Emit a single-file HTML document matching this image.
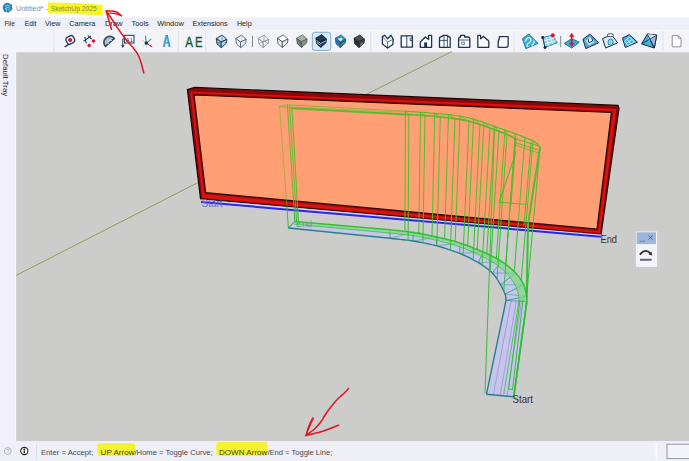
<!DOCTYPE html>
<html lang="en"><head><meta charset="utf-8"><title>Untitled - SketchUp 2025</title>
<style>
html,body{margin:0;padding:0;background:#fff;overflow:hidden}
body{width:689px;height:461px;position:relative;font-family:"Liberation Sans",sans-serif}
svg{position:absolute;left:0;top:0;display:block}
</style></head><body>
<svg width="689" height="461" viewBox="0 0 689 461">
<!-- window chrome -->
<rect x="0" y="0" width="689" height="461" fill="#ffffff"/>
<rect x="0" y="17.3" width="689" height="13.2" fill="#efeff7"/>
<rect x="0" y="30.3" width="689" height="22" fill="#f3f3fa"/>
<rect x="0" y="30.2" width="689" height="0.8" fill="#f9f9fd"/>
<rect x="0" y="52.2" width="16.3" height="389.2" fill="#f1f0fa"/>
<rect x="15.4" y="52.2" width="0.8" height="389.2" fill="#fbfbff"/>
<rect x="16.1" y="52.2" width="672.9" height="389.2" fill="#cccccb"/>
<rect x="0" y="441.3" width="689" height="20" fill="#efeff7"/>
<rect x="667" y="444.2" width="30" height="14.4" fill="#f3f3fa" stroke="#8e8e94" stroke-width="0.9"/>
<line x1="656.5" y1="443" x2="656.5" y2="460" stroke="#fbfbff" stroke-width="1.6"/>
<!-- 3D scene -->
<g>
<line x1="16.3" y1="275.3" x2="200" y2="181.5" stroke="#8c9a4c" stroke-width="0.9"/>
<line x1="366" y1="94.5" x2="452" y2="51.5" stroke="#8c9a4c" stroke-width="0.9"/>
<polygon points="187.4,89.6 194.8,87.4 618.0,105.4 619.0,108.5 601.0,234.6 200.5,198.8" fill="#8c0707" stroke="#1a0505" stroke-width="1.2" stroke-linejoin="round"/>
<polygon points="190.2,91.6 616.3,108.9 600.2,233.2 202.4,197.9" fill="#dc1111"/>
<polygon points="194.0,94.9 611.4,112.5 597.0,229.2 205.7,192.7" fill="none" stroke="#a80c0c" stroke-width="3.4" stroke-linejoin="miter"/>
<polygon points="194.0,94.9 611.4,112.5 597.0,229.2 205.7,192.7" fill="#ff9f73" stroke="#2a0808" stroke-width="1.2"/>
<polygon points="201.0,199.4 601.0,234.6 601.0,239.0 201.0,204.2" fill="#cfcbf0"/>
<line x1="201" y1="202.1" x2="600.8" y2="236.7" stroke="#2a2ad8" stroke-width="2"/>
<polygon points="294.8,221.5 390.0,229.8 391.8,230.0 394.1,230.2 396.9,230.5 400.0,230.8 403.3,231.2 406.7,231.5 409.9,232.0 413.0,232.4 415.9,232.9 418.8,233.4 421.8,233.9 424.7,234.5 427.7,235.1 430.6,235.7 433.6,236.3 436.5,237.0 439.4,237.7 442.3,238.3 445.3,239.0 448.2,239.7 451.1,240.5 454.0,241.3 456.9,242.1 459.8,243.0 462.7,244.0 465.7,245.0 468.7,246.1 471.7,247.3 474.6,248.5 477.5,249.6 480.3,250.8 483.0,252.0 485.6,253.1 488.1,254.3 490.5,255.4 492.9,256.6 495.2,257.8 497.4,259.0 499.5,260.2 501.6,261.5 503.6,262.8 505.6,264.2 507.4,265.7 509.3,267.1 511.0,268.6 512.6,270.1 514.2,271.5 515.6,273.0 516.9,274.5 518.2,275.9 519.3,277.4 520.3,278.9 521.3,280.4 522.2,281.9 523.0,283.3 523.7,284.8 524.3,286.3 524.9,287.9 525.3,289.4 525.7,291.0 526.0,292.5 526.3,293.9 526.5,295.3 526.7,296.4 526.9,297.4 526.9,298.3 527.0,299.1 526.9,299.8 526.9,300.4 526.9,300.9 526.8,301.3 526.8,301.7 513.8,396.8 486.5,394.2 506.0,300.4 505.9,299.9 505.9,299.3 505.9,298.6 505.8,297.8 505.7,296.9 505.5,295.9 505.3,295.0 505.0,294.0 504.6,293.0 504.2,292.0 503.7,290.9 503.2,289.7 502.6,288.6 502.0,287.3 501.3,286.1 500.5,284.8 499.7,283.4 498.8,282.0 497.9,280.5 497.0,279.0 496.0,277.4 494.8,275.9 493.6,274.4 492.3,273.0 490.9,271.6 489.3,270.3 487.7,269.0 486.0,267.7 484.2,266.4 482.3,265.2 480.4,263.9 478.4,262.7 476.3,261.5 474.2,260.3 472.0,259.1 469.7,257.9 467.3,256.7 464.9,255.6 462.4,254.5 459.8,253.4 457.1,252.3 454.3,251.3 451.4,250.3 448.5,249.3 445.5,248.4 442.4,247.5 439.5,246.6 436.5,245.8 433.6,245.1 430.6,244.4 427.7,243.7 424.7,243.1 421.8,242.5 418.8,242.0 415.9,241.5 413.0,241.0 409.9,240.5 406.7,240.1 403.3,239.7 400.0,239.4 396.9,239.0 394.1,238.7 391.8,238.5 390.0,238.3 288.4,228.0" fill="#c6c6ea"/>
<line x1="390.0" y1="229.8" x2="390.0" y2="238.3" stroke="#2f8f8f" stroke-width="0.8"/>
<line x1="413.0" y1="232.4" x2="413.0" y2="241.0" stroke="#2f8f8f" stroke-width="0.8"/>
<line x1="413.0" y1="232.4" x2="390.0" y2="238.3" stroke="#4a9aa8" stroke-width="0.6"/>
<line x1="436.5" y1="237.0" x2="436.5" y2="245.8" stroke="#2f8f8f" stroke-width="0.8"/>
<line x1="436.5" y1="237.0" x2="413.0" y2="241.0" stroke="#4a9aa8" stroke-width="0.6"/>
<line x1="459.8" y1="243.0" x2="459.8" y2="253.4" stroke="#2f8f8f" stroke-width="0.8"/>
<line x1="459.8" y1="243.0" x2="436.5" y2="245.8" stroke="#4a9aa8" stroke-width="0.6"/>
<line x1="483.0" y1="252.0" x2="478.4" y2="262.7" stroke="#2f8f8f" stroke-width="0.8"/>
<line x1="483.0" y1="252.0" x2="459.8" y2="253.4" stroke="#4a9aa8" stroke-width="0.6"/>
<line x1="501.6" y1="261.5" x2="492.3" y2="273.0" stroke="#2f8f8f" stroke-width="0.8"/>
<line x1="501.6" y1="261.5" x2="478.4" y2="262.7" stroke="#4a9aa8" stroke-width="0.6"/>
<line x1="515.6" y1="273.0" x2="500.5" y2="284.8" stroke="#2f8f8f" stroke-width="0.8"/>
<line x1="515.6" y1="273.0" x2="492.3" y2="273.0" stroke="#4a9aa8" stroke-width="0.6"/>
<line x1="523.7" y1="284.8" x2="505.0" y2="294.0" stroke="#2f8f8f" stroke-width="0.8"/>
<line x1="523.7" y1="284.8" x2="500.5" y2="284.8" stroke="#4a9aa8" stroke-width="0.6"/>
<line x1="526.7" y1="296.4" x2="506.0" y2="300.4" stroke="#2f8f8f" stroke-width="0.8"/>
<line x1="526.7" y1="296.4" x2="505.0" y2="294.0" stroke="#4a9aa8" stroke-width="0.6"/>
<line x1="526.8" y1="301.7" x2="506.0" y2="300.4" stroke="#2f8f8f" stroke-width="0.8"/>
<line x1="511.2" y1="300.7" x2="493.3" y2="394.9" stroke="#8f8fd8" stroke-width="0.7"/>
<line x1="516.4" y1="301.0" x2="500.1" y2="395.5" stroke="#8f8fd8" stroke-width="0.7"/>
<line x1="521.6" y1="301.4" x2="507.0" y2="396.1" stroke="#8f8fd8" stroke-width="0.7"/>
<polyline points="288.4,228.0 390.0,238.3 391.8,238.5 394.1,238.7 396.9,239.0 400.0,239.4 403.3,239.7 406.7,240.1 409.9,240.5 413.0,241.0 415.9,241.5 418.8,242.0 421.8,242.5 424.7,243.1 427.7,243.7 430.6,244.4 433.6,245.1 436.5,245.8 439.5,246.6 442.4,247.5 445.5,248.4 448.5,249.3 451.4,250.3 454.3,251.3 457.1,252.3 459.8,253.4 462.4,254.5 464.9,255.6 467.3,256.7 469.7,257.9 472.0,259.1 474.2,260.3 476.3,261.5 478.4,262.7 480.4,263.9 482.3,265.2 484.2,266.4 486.0,267.7 487.7,269.0 489.3,270.3 490.9,271.6 492.3,273.0 493.6,274.4 494.8,275.9 496.0,277.4 497.0,279.0 497.9,280.5 498.8,282.0 499.7,283.4 500.5,284.8 501.3,286.1 502.0,287.3 502.6,288.6 503.2,289.7 503.7,290.9 504.2,292.0 504.6,293.0 505.0,294.0 505.3,295.0 505.5,295.9 505.7,296.9 505.8,297.8 505.9,298.6 505.9,299.3 505.9,299.9 506.0,300.4 486.5,394.2" fill="none" stroke="#2a7f8f" stroke-width="1.4"/>
<polyline points="486.5,394.2 513.8,396.8" fill="none" stroke="#2a7f8f" stroke-width="1.4"/>
<polyline points="288.4,228.0 294.8,221.5" fill="none" stroke="#2a7f8f" stroke-width="1"/>
<polygon points="294.8,221.5 390.0,229.8 391.8,230.0 394.1,230.2 396.9,230.5 400.0,230.8 403.3,231.2 406.7,231.5 409.9,232.0 413.0,232.4 415.9,232.9 418.8,233.4 421.8,233.9 424.7,234.5 427.7,235.1 430.6,235.7 433.6,236.3 436.5,237.0 439.4,237.7 442.3,238.3 445.3,239.0 448.2,239.7 451.1,240.5 454.0,241.3 456.9,242.1 459.8,243.0 462.7,244.0 465.7,245.0 468.7,246.1 471.7,247.3 474.6,248.5 477.5,249.6 480.3,250.8 483.0,252.0 485.6,253.1 488.1,254.3 490.5,255.4 492.9,256.6 495.2,257.8 497.4,259.0 499.5,260.2 501.6,261.5 503.6,262.8 505.6,264.2 507.4,265.7 509.3,267.1 511.0,268.6 512.6,270.1 514.2,271.5 515.6,273.0 516.9,274.5 518.2,275.9 519.3,277.4 520.3,278.9 521.3,280.4 522.2,281.9 523.0,283.3 523.7,284.8 524.3,286.3 524.9,287.9 525.3,289.4 525.7,291.0 526.0,292.5 526.3,293.9 526.5,295.3 526.7,296.4 526.9,297.4 526.9,298.3 527.0,299.1 526.9,299.8 526.9,300.4 526.9,300.9 526.8,301.3 526.8,301.7 518.9,301.2 518.9,301.0 518.9,300.7 519.0,300.4 519.0,300.0 519.0,299.6 519.0,299.1 518.9,298.0 518.8,297.1 518.6,296.2 518.4,295.1 518.2,293.8 518.0,292.8 517.7,291.5 517.3,290.2 516.9,289.0 516.4,287.8 515.8,286.5 515.1,285.2 514.4,283.8 513.6,282.5 512.7,281.1 511.7,279.7 510.6,278.2 509.4,276.7 508.1,275.2 506.8,273.7 505.5,272.3 504.1,270.9 502.7,269.5 501.0,268.1 499.4,266.8 497.7,265.6 496.0,264.3 494.1,263.1 492.1,261.8 490.0,260.6 487.8,259.4 485.6,258.2 483.2,257.0 480.8,255.8 478.2,254.5 475.5,253.3 472.8,252.1 470.0,250.9 467.1,249.7 464.3,248.5 461.4,247.5 458.5,246.5 455.7,245.5 452.9,244.6 450.0,243.8 447.1,243.0 444.3,242.3 441.4,241.5 438.6,240.8 435.7,240.1 432.8,239.5 429.9,238.8 427.0,238.2 424.1,237.6 421.2,237.1 418.3,236.6 415.4,236.1 412.5,235.6 409.5,235.2 406.3,234.8 403.0,234.4 399.7,234.0 396.6,233.7 393.8,233.4 391.4,233.2 389.7,233.0 294.5,224.2" fill="#7fdc7f" fill-opacity="0.7"/>
<polyline points="294.8,221.5 390.0,229.8 391.8,230.0 394.1,230.2 396.9,230.5 400.0,230.8 403.3,231.2 406.7,231.5 409.9,232.0 413.0,232.4 415.9,232.9 418.8,233.4 421.8,233.9 424.7,234.5 427.7,235.1 430.6,235.7 433.6,236.3 436.5,237.0 439.4,237.7 442.3,238.3 445.3,239.0 448.2,239.7 451.1,240.5 454.0,241.3 456.9,242.1 459.8,243.0 462.7,244.0 465.7,245.0 468.7,246.1 471.7,247.3 474.6,248.5 477.5,249.6 480.3,250.8 483.0,252.0 485.6,253.1 488.1,254.3 490.5,255.4 492.9,256.6 495.2,257.8 497.4,259.0 499.5,260.2 501.6,261.5 503.6,262.8 505.6,264.2 507.4,265.7 509.3,267.1 511.0,268.6 512.6,270.1 514.2,271.5 515.6,273.0 516.9,274.5 518.2,275.9 519.3,277.4 520.3,278.9 521.3,280.4 522.2,281.9 523.0,283.3 523.7,284.8 524.3,286.3 524.9,287.9 525.3,289.4 525.7,291.0 526.0,292.5 526.3,293.9 526.5,295.3 526.7,296.4 526.9,297.4 526.9,298.3 527.0,299.1 526.9,299.8 526.9,300.4 526.9,300.9 526.8,301.3 526.8,301.7 513.8,396.8" fill="none" stroke="#2fbf2f" stroke-width="1.6" stroke-opacity="0.95"/>
<polyline points="294.5,224.2 389.7,233.0 391.4,233.2 393.8,233.4 396.6,233.7 399.7,234.0 403.0,234.4 406.3,234.8 409.5,235.2 412.5,235.6 415.4,236.1 418.3,236.6 421.2,237.1 424.1,237.6 427.0,238.2 429.9,238.8 432.8,239.5 435.7,240.1 438.6,240.8 441.4,241.5 444.3,242.3 447.1,243.0 450.0,243.8 452.9,244.6 455.7,245.5 458.5,246.5 461.4,247.5 464.3,248.5 467.1,249.7 470.0,250.9 472.8,252.1 475.5,253.3 478.2,254.5 480.8,255.8 483.2,257.0 485.6,258.2 487.8,259.4 490.0,260.6 492.1,261.8 494.1,263.1 496.0,264.3 497.7,265.6 499.4,266.8 501.0,268.1 502.7,269.5 504.1,270.9 505.5,272.3 506.8,273.7 508.1,275.2 509.4,276.7 510.6,278.2 511.7,279.7 512.7,281.1 513.6,282.5 514.4,283.8 515.1,285.2 515.8,286.5 516.4,287.8 516.9,289.0 517.3,290.2 517.7,291.5 518.0,292.8 518.2,293.8 518.4,295.1 518.6,296.2 518.8,297.1 518.9,298.0 519.0,299.1 519.0,299.6 519.0,300.0 519.0,300.4 518.9,300.7 518.9,301.0 518.9,301.2 503.7,394.7" fill="none" stroke="#2fbf2f" stroke-width="0.8" stroke-opacity="0.9"/>
<defs><clipPath id="cw"><polygon points="187.4,89.6 194.8,87.4 618.0,105.4 619.0,108.5 601.0,234.6 200.5,198.8"/></clipPath><clipPath id="cg"><path clip-rule="evenodd" d="M0,0H689V461H0Z M187.4,89.6 L194.8,87.4 L618.0,105.4 L619.0,108.5 L601.0,234.6 L200.5,198.8Z"/></clipPath></defs>
<g clip-path="url(#cw)"><g stroke="#52bc2a" stroke-opacity="0.95" fill="none" stroke-linecap="round"><line x1="279.6" y1="106.5" x2="288.4" y2="228.0" stroke-width="1.0" stroke-opacity="0.5"/><line x1="287.4" y1="104.8" x2="294.8" y2="221.5" stroke-width="1.1" stroke-opacity="0.8"/><line x1="289.6" y1="105.8" x2="296.6" y2="222.0" stroke-width="1.1" stroke-opacity="0.8"/><line x1="292.0" y1="108.3" x2="298.4" y2="222.2" stroke-width="1.1" stroke-opacity="0.85"/><line x1="279.6" y1="106.5" x2="287.4" y2="104.8" stroke-width="1.0" stroke-opacity="0.5"/><line x1="279.6" y1="106.5" x2="292.0" y2="108.3" stroke-width="0.8" stroke-opacity="0.5"/><line x1="279.6" y1="106.5" x2="405.0" y2="112.3" stroke-width="0.8" stroke-opacity="0.5"/><line x1="287.4" y1="104.8" x2="405.0" y2="111.2" stroke-width="0.9" stroke-opacity="0.7"/><line x1="292.0" y1="108.3" x2="406.0" y2="114.4" stroke-width="2.0"/><line x1="405.4" y1="111.2" x2="404.9" y2="231.3" stroke-width="1.0"/><line x1="420.5" y1="112.3" x2="418.8" y2="233.4" stroke-width="1.0"/><line x1="434.8" y1="113.4" x2="432.0" y2="236.0" stroke-width="1.0"/><line x1="448.5" y1="114.6" x2="444.6" y2="238.9" stroke-width="1.0"/><line x1="460.0" y1="116.1" x2="455.2" y2="241.6" stroke-width="1.0"/><line x1="473.6" y1="119.2" x2="467.7" y2="245.7" stroke-width="1.0"/><line x1="484.0" y1="122.5" x2="477.2" y2="249.5" stroke-width="1.0"/><line x1="494.5" y1="126.4" x2="486.8" y2="253.7" stroke-width="1.0"/><line x1="505.0" y1="130.0" x2="496.4" y2="258.4" stroke-width="1.0"/><line x1="515.5" y1="133.8" x2="505.9" y2="264.5" stroke-width="1.0"/><line x1="525.0" y1="137.4" x2="514.3" y2="271.7" stroke-width="1.0"/><line x1="533.0" y1="140.9" x2="521.2" y2="280.2" stroke-width="1.0"/><line x1="540.0" y1="148.0" x2="526.7" y2="296.4" stroke-width="1.0"/><line x1="408.9" y1="114.6" x2="408.1" y2="240.3" stroke-width="1.0"/><line x1="425.0" y1="115.6" x2="422.9" y2="242.7" stroke-width="1.0"/><line x1="440.3" y1="117.0" x2="436.9" y2="245.9" stroke-width="1.0"/><line x1="455.0" y1="118.7" x2="450.4" y2="250.0" stroke-width="1.0"/><line x1="469.0" y1="121.3" x2="463.1" y2="254.8" stroke-width="1.0"/><line x1="480.0" y1="124.4" x2="473.1" y2="259.7" stroke-width="1.0"/><line x1="490.0" y1="128.1" x2="482.1" y2="265.0" stroke-width="1.0"/><line x1="499.0" y1="131.4" x2="490.2" y2="271.0" stroke-width="1.0"/><line x1="507.0" y1="134.5" x2="497.1" y2="279.2" stroke-width="1.0"/><line x1="515.0" y1="138.5" x2="503.8" y2="291.0" stroke-width="1.0"/><line x1="405.4" y1="111.2" x2="408.9" y2="114.6" stroke-width="0.8"/><line x1="420.5" y1="112.3" x2="425.0" y2="115.6" stroke-width="0.8"/><line x1="434.8" y1="113.4" x2="440.3" y2="117.0" stroke-width="0.8"/><line x1="448.5" y1="114.6" x2="455.0" y2="118.7" stroke-width="0.8"/><line x1="460.0" y1="116.1" x2="469.0" y2="121.3" stroke-width="0.8"/><line x1="473.6" y1="119.2" x2="480.0" y2="124.4" stroke-width="0.8"/><line x1="484.0" y1="122.5" x2="490.0" y2="128.1" stroke-width="0.8"/><line x1="494.5" y1="126.4" x2="499.0" y2="131.4" stroke-width="0.8"/><line x1="505.0" y1="130.0" x2="507.0" y2="134.5" stroke-width="0.8"/><line x1="515.5" y1="133.8" x2="515.0" y2="138.5" stroke-width="0.8"/><line x1="515.0" y1="138.5" x2="540.0" y2="146.5" stroke-width="1.0"/><line x1="515.0" y1="142.5" x2="539.6" y2="150.5" stroke-width="0.9"/><line x1="516.0" y1="145.5" x2="538.6" y2="153.0" stroke-width="0.8"/><line x1="530.8" y1="142.5" x2="530.4" y2="151.0" stroke-width="0.8"/><line x1="515.0" y1="138.5" x2="515.6" y2="146.0" stroke-width="0.9"/><line x1="516.0" y1="152.0" x2="499.2" y2="202.2" stroke-width="1.2"/><line x1="499.2" y1="202.2" x2="527.0" y2="204.5" stroke-width="1.0"/><line x1="516.0" y1="139.0" x2="511.0" y2="205.0" stroke-width="1.0"/><line x1="530.8" y1="146.0" x2="524.0" y2="225.0" stroke-width="1.0"/><line x1="540.0" y1="148.0" x2="533.2" y2="190.0" stroke-width="2.0"/><line x1="533.2" y1="190.0" x2="528.0" y2="224.8" stroke-width="2.0"/><line x1="528.0" y1="224.8" x2="526.7" y2="296.4" stroke-width="2.0"/><line x1="494.6" y1="126.4" x2="485.0" y2="392.9" stroke-width="1.0"/><line x1="520.0" y1="300.0" x2="508.6" y2="389.0" stroke-width="1.0"/><line x1="523.0" y1="300.0" x2="512.5" y2="389.5" stroke-width="1.0"/><line x1="508.6" y1="389.0" x2="512.5" y2="389.5" stroke-width="1.0"/><line x1="526.8" y1="301.7" x2="513.8" y2="396.8" stroke-width="1.6"/></g><g stroke="#52bc2a"><polyline points="405.0,111.2 406.9,111.3 409.4,111.5 412.3,111.7 415.6,111.9 419.2,112.2 422.8,112.4 426.5,112.7 430.0,113.0 433.6,113.3 437.4,113.6 441.3,114.0 445.3,114.3 449.2,114.7 453.0,115.1 456.5,115.5 459.7,116.0 462.5,116.5 465.1,117.0 467.5,117.5 469.7,118.1 471.8,118.6 473.8,119.2 475.9,119.9 478.0,120.5 480.1,121.2 482.2,121.8 484.2,122.5 486.1,123.3 488.1,124.0 490.2,124.8 492.3,125.6 494.6,126.4 497.1,127.3 499.7,128.2 502.4,129.1 505.2,130.1 507.9,131.1 510.6,132.0 513.2,132.9 515.5,133.8 517.7,134.6 519.8,135.4 521.7,136.1 523.6,136.9 525.4,137.6 527.1,138.2 528.6,138.9 530.0,139.5 531.3,140.1 532.4,140.6 533.4,141.1 534.2,141.6 535.0,142.0 535.7,142.5 536.4,143.0 537.0,143.5 537.6,144.1 538.1,144.7 538.5,145.3 538.9,146.0 539.3,146.6 539.6,147.2 539.8,147.6 540.0,148.0" fill="none" stroke-width="1.2"/><polyline points="406.0,114.4 407.8,114.5 410.2,114.6 413.0,114.8 416.1,115.0 419.5,115.2 423.0,115.4 426.6,115.7 430.0,116.0 433.5,116.3 437.3,116.7 441.2,117.1 445.2,117.5 449.1,118.0 452.9,118.4 456.5,118.9 459.7,119.4 462.5,119.9 465.1,120.4 467.5,120.9 469.7,121.4 471.8,122.0 473.8,122.6 475.9,123.2 478.0,123.8 480.2,124.5 482.4,125.2 484.5,126.0 486.7,126.8 488.8,127.6 490.8,128.4 492.7,129.1 494.6,129.8 496.4,130.5 498.1,131.1 499.8,131.7 501.3,132.3 502.9,132.8 504.3,133.4 505.7,134.0 507.0,134.5 508.3,135.1 509.5,135.6 510.7,136.2 511.8,136.8 512.8,137.3 513.7,137.8 514.4,138.2 515.0,138.5" fill="none" stroke-width="1.6"/></g></g>
<g clip-path="url(#cg)"><g stroke="#2fbf2f" stroke-opacity="0.95" fill="none" stroke-linecap="round"><line x1="279.6" y1="106.5" x2="288.4" y2="228.0" stroke-width="1.0"/><line x1="287.4" y1="104.8" x2="294.8" y2="221.5" stroke-width="1.1"/><line x1="289.6" y1="105.8" x2="296.6" y2="222.0" stroke-width="1.1"/><line x1="292.0" y1="108.3" x2="298.4" y2="222.2" stroke-width="1.1"/><line x1="279.6" y1="106.5" x2="287.4" y2="104.8" stroke-width="1.0"/><line x1="279.6" y1="106.5" x2="292.0" y2="108.3" stroke-width="0.8"/><line x1="279.6" y1="106.5" x2="405.0" y2="112.3" stroke-width="0.8"/><line x1="287.4" y1="104.8" x2="405.0" y2="111.2" stroke-width="0.9"/><line x1="292.0" y1="108.3" x2="406.0" y2="114.4" stroke-width="2.0"/><line x1="405.4" y1="111.2" x2="404.9" y2="231.3" stroke-width="1.0"/><line x1="420.5" y1="112.3" x2="418.8" y2="233.4" stroke-width="1.0"/><line x1="434.8" y1="113.4" x2="432.0" y2="236.0" stroke-width="1.0"/><line x1="448.5" y1="114.6" x2="444.6" y2="238.9" stroke-width="1.0"/><line x1="460.0" y1="116.1" x2="455.2" y2="241.6" stroke-width="1.0"/><line x1="473.6" y1="119.2" x2="467.7" y2="245.7" stroke-width="1.0"/><line x1="484.0" y1="122.5" x2="477.2" y2="249.5" stroke-width="1.0"/><line x1="494.5" y1="126.4" x2="486.8" y2="253.7" stroke-width="1.0"/><line x1="505.0" y1="130.0" x2="496.4" y2="258.4" stroke-width="1.0"/><line x1="515.5" y1="133.8" x2="505.9" y2="264.5" stroke-width="1.0"/><line x1="525.0" y1="137.4" x2="514.3" y2="271.7" stroke-width="1.0"/><line x1="533.0" y1="140.9" x2="521.2" y2="280.2" stroke-width="1.0"/><line x1="540.0" y1="148.0" x2="526.7" y2="296.4" stroke-width="1.0"/><line x1="408.9" y1="114.6" x2="408.1" y2="240.3" stroke-width="1.0"/><line x1="425.0" y1="115.6" x2="422.9" y2="242.7" stroke-width="1.0"/><line x1="440.3" y1="117.0" x2="436.9" y2="245.9" stroke-width="1.0"/><line x1="455.0" y1="118.7" x2="450.4" y2="250.0" stroke-width="1.0"/><line x1="469.0" y1="121.3" x2="463.1" y2="254.8" stroke-width="1.0"/><line x1="480.0" y1="124.4" x2="473.1" y2="259.7" stroke-width="1.0"/><line x1="490.0" y1="128.1" x2="482.1" y2="265.0" stroke-width="1.0"/><line x1="499.0" y1="131.4" x2="490.2" y2="271.0" stroke-width="1.0"/><line x1="507.0" y1="134.5" x2="497.1" y2="279.2" stroke-width="1.0"/><line x1="515.0" y1="138.5" x2="503.8" y2="291.0" stroke-width="1.0"/><line x1="405.4" y1="111.2" x2="408.9" y2="114.6" stroke-width="0.8"/><line x1="420.5" y1="112.3" x2="425.0" y2="115.6" stroke-width="0.8"/><line x1="434.8" y1="113.4" x2="440.3" y2="117.0" stroke-width="0.8"/><line x1="448.5" y1="114.6" x2="455.0" y2="118.7" stroke-width="0.8"/><line x1="460.0" y1="116.1" x2="469.0" y2="121.3" stroke-width="0.8"/><line x1="473.6" y1="119.2" x2="480.0" y2="124.4" stroke-width="0.8"/><line x1="484.0" y1="122.5" x2="490.0" y2="128.1" stroke-width="0.8"/><line x1="494.5" y1="126.4" x2="499.0" y2="131.4" stroke-width="0.8"/><line x1="505.0" y1="130.0" x2="507.0" y2="134.5" stroke-width="0.8"/><line x1="515.5" y1="133.8" x2="515.0" y2="138.5" stroke-width="0.8"/><line x1="515.0" y1="138.5" x2="540.0" y2="146.5" stroke-width="1.0"/><line x1="515.0" y1="142.5" x2="539.6" y2="150.5" stroke-width="0.9"/><line x1="516.0" y1="145.5" x2="538.6" y2="153.0" stroke-width="0.8"/><line x1="530.8" y1="142.5" x2="530.4" y2="151.0" stroke-width="0.8"/><line x1="515.0" y1="138.5" x2="515.6" y2="146.0" stroke-width="0.9"/><line x1="516.0" y1="152.0" x2="499.2" y2="202.2" stroke-width="1.2"/><line x1="499.2" y1="202.2" x2="527.0" y2="204.5" stroke-width="1.0"/><line x1="516.0" y1="139.0" x2="511.0" y2="205.0" stroke-width="1.0"/><line x1="530.8" y1="146.0" x2="524.0" y2="225.0" stroke-width="1.0"/><line x1="540.0" y1="148.0" x2="533.2" y2="190.0" stroke-width="2.0"/><line x1="533.2" y1="190.0" x2="528.0" y2="224.8" stroke-width="2.0"/><line x1="528.0" y1="224.8" x2="526.7" y2="296.4" stroke-width="2.0"/><line x1="494.6" y1="126.4" x2="485.0" y2="392.9" stroke-width="1.0"/><line x1="520.0" y1="300.0" x2="508.6" y2="389.0" stroke-width="1.0"/><line x1="523.0" y1="300.0" x2="512.5" y2="389.5" stroke-width="1.0"/><line x1="508.6" y1="389.0" x2="512.5" y2="389.5" stroke-width="1.0"/><line x1="526.8" y1="301.7" x2="513.8" y2="396.8" stroke-width="1.6"/></g></g>
<text x="201.5" y="206.5" font-family="Liberation Sans, sans-serif" font-size="10.5" fill="#6a6acc" textLength="21" lengthAdjust="spacingAndGlyphs">Start</text>
<text x="296" y="227" font-family="Liberation Sans, sans-serif" font-size="9.5" fill="#7a9a8a" textLength="16" lengthAdjust="spacingAndGlyphs">End</text>
<text x="600.5" y="242.6" font-family="Liberation Sans, sans-serif" font-size="10.8" fill="#333" textLength="16.5" lengthAdjust="spacingAndGlyphs">End</text>
<text x="512.5" y="402.8" font-family="Liberation Sans, sans-serif" font-size="10.8" fill="#333" textLength="20.5" lengthAdjust="spacingAndGlyphs">Start</text>
</g>
<!-- toolbar icons -->
<line x1="53.9" y1="31" x2="53.9" y2="51" stroke="#dcdce6" stroke-width="0.8"/>
<line x1="178.3" y1="31" x2="178.3" y2="51" stroke="#dcdce6" stroke-width="0.8"/>
<line x1="205.8" y1="31" x2="205.8" y2="51" stroke="#dcdce6" stroke-width="0.8"/>
<line x1="252.5" y1="35.8" x2="252.5" y2="46.9" stroke="#7f8a8c" stroke-width="1"/>
<line x1="370.8" y1="31" x2="370.8" y2="51" stroke="#dcdce6" stroke-width="0.8"/>
<line x1="514.1" y1="31" x2="514.1" y2="51" stroke="#dcdce6" stroke-width="0.8"/>
<line x1="560.7" y1="35.8" x2="560.7" y2="46.9" stroke="#7f8a8c" stroke-width="1"/>
<line x1="663" y1="31" x2="663" y2="51" stroke="#dcdce6" stroke-width="0.8"/>
<g><path d="M68.7,44.4 L65.2,46.6" stroke="#25385f" stroke-width="1.3" stroke-linecap="round"/><rect x="-4.1" y="-3.7" width="8.2" height="7.4" rx="2.5" transform="translate(70.3,39.9) rotate(-28)" fill="#fbfbff" stroke="#25385f" stroke-width="1.3"/><circle cx="70.2" cy="40" r="2.05" fill="#dc1424"/></g>
<g stroke="#1d3552" stroke-width="1.1" stroke-linecap="round"><path d="M83.9,41 L90.6,36.4 M84.9,37.2 L86.2,43 M88.2,35.8 L91.3,38.8"/></g><circle cx="93.5" cy="41.1" r="1.75" fill="#dc1424"/><circle cx="89.2" cy="45.4" r="1.75" fill="#dc1424"/>
<polygon points="105.4,46.3 104.5,45.0 104.0,43.5 103.9,42.0 104.2,40.5 104.9,39.1 105.9,37.9 107.2,37.0 108.7,36.5 110.2,36.4 111.7,36.7 113.1,37.4 114.3,38.4" fill="#aebfd0" stroke="#35485c" stroke-width="1.6" stroke-linejoin="round"/><path d="M108.2,44 A2.6,2.6 0 0 1 111.8,40.6" fill="none" stroke="#eef2f6" stroke-width="0.9"/>
<g fill="none" stroke="#1d3552" stroke-width="1"><rect x="124.6" y="35.3" width="9.4" height="7.7" fill="#fafaff"/><path d="M124.6,38.8 H122.8 V45.6"/></g><path d="M121,45.2 L122.8,48 L124.6,45.2 Z" fill="#1d3552"/><text x="126.1" y="41.6" font-family="Liberation Sans, sans-serif" font-size="5.6" fill="#1d3552" textLength="6.6" lengthAdjust="spacingAndGlyphs">A1</text>
<g stroke-linecap="round"><path d="M146.3,43.1 L141.8,39.8" stroke="#eeb0bc" stroke-width="0.9" stroke-dasharray="1,0.9"/><path d="M146.3,43.1 L142.6,46.4" stroke="#b8dcc0" stroke-width="0.9" stroke-dasharray="1,0.9"/><path d="M146.3,43.1 L145.5,36.4" stroke="#2a8fae" stroke-width="1.1"/><path d="M146.3,43.1 L150.8,39.3" stroke="#3a9464" stroke-width="1.1"/><path d="M146.3,43.1 L151.8,46.7" stroke="#d22a40" stroke-width="1.1"/><path d="M146.3,43.1 L146.7,47.2" stroke="#9cd0e4" stroke-width="0.9" stroke-dasharray="1,0.9"/></g><circle cx="146.3" cy="43.1" r="1.7" fill="#14283c"/>
<text x="163.6" y="47" font-family="Liberation Sans, sans-serif" font-size="15.6" fill="#1a6a96" textLength="6.8" lengthAdjust="spacingAndGlyphs">A</text>
<text x="162.6" y="46.8" font-family="Liberation Sans, sans-serif" font-size="15.6" fill="#35aee0" textLength="6.8" lengthAdjust="spacingAndGlyphs">A</text>
<text x="185.2" y="46.7" font-family="Liberation Sans, sans-serif" font-size="15.2" fill="#1b5a3a" stroke="#1b5a3a" stroke-width="0.35" textLength="7.8" lengthAdjust="spacingAndGlyphs">A</text>
<text x="194.9" y="46.7" font-family="Liberation Sans, sans-serif" font-size="15.2" fill="#1b5a3a" stroke="#1b5a3a" stroke-width="0.35" textLength="7.6" lengthAdjust="spacingAndGlyphs">E</text>
<g transform="translate(221.5,41.3)" stroke="#22384e" stroke-width="0.95" stroke-linejoin="round"><polygon points="-5.2,-2.8 0.7,-6.2 5.3,-1.9 -0.4,0.7" fill="#c4e2f3"/><polygon points="-5.2,-2.8 -0.4,0.7 -0.2,6.4 -4.5,2.6" fill="#86b8da"/><polygon points="-0.4,0.7 5.3,-1.9 4.9,1.8 -0.2,6.4" fill="#aed4ec"/><path d="M0.7,-6.2 L0.5,-0.4 L4.9,1.8 M0.5,-0.4 L-4.5,2.6" fill="none" stroke-width="0.5" stroke="#4a6a8a"/></g>
<g transform="translate(240.9,41.3)" stroke="#46586a" stroke-width="0.8" stroke-linejoin="round"><polygon points="-5.2,-2.8 0.7,-6.2 5.3,-1.9 -0.4,0.7" fill="#f0f7fb"/><polygon points="-5.2,-2.8 -0.4,0.7 -0.2,6.4 -4.5,2.6" fill="#f4f8fc"/><polygon points="-0.4,0.7 5.3,-1.9 4.9,1.8 -0.2,6.4" fill="#e6f0f7"/><path d="M0.7,-6.2 L0.5,-0.4 L4.9,1.8 M0.5,-0.4 L-4.5,2.6" fill="none" stroke-width="0.45" stroke="#9ab"/></g>
<g transform="translate(263.4,41.3)" stroke="#868e98" stroke-width="0.75" stroke-linejoin="round"><polygon points="-5.2,-2.8 0.7,-6.2 5.3,-1.9 -0.4,0.7" fill="none"/><polygon points="-5.2,-2.8 -0.4,0.7 -0.2,6.4 -4.5,2.6" fill="none"/><polygon points="-0.4,0.7 5.3,-1.9 4.9,1.8 -0.2,6.4" fill="none"/><path d="M0.7,-6.2 L0.5,-0.4 L4.9,1.8 M0.5,-0.4 L-4.5,2.6" fill="none" stroke-width="0.7" stroke="#868e98"/></g>
<g transform="translate(282.6,41.1)" stroke="#3a444e" stroke-width="0.8" stroke-linejoin="round"><polygon points="-5.2,-2.8 0.7,-6.2 5.3,-1.9 -0.4,0.7" fill="#fbfdff"/><polygon points="-5.2,-2.8 -0.4,0.7 -0.2,6.4 -4.5,2.6" fill="#f6f9fc"/><polygon points="-0.4,0.7 5.3,-1.9 4.9,1.8 -0.2,6.4" fill="#eef2f6"/></g>
<g transform="translate(301.8,41.1)" stroke="#444e4a" stroke-width="0.7" stroke-linejoin="round"><polygon points="-5.2,-2.8 0.7,-6.2 5.3,-1.9 -0.4,0.7" fill="#a9b1a9"/><polygon points="-5.2,-2.8 -0.4,0.7 -0.2,6.4 -4.5,2.6" fill="#6f7872"/><polygon points="-0.4,0.7 5.3,-1.9 4.9,1.8 -0.2,6.4" fill="#8a938c"/></g>
<rect x="312.3" y="32.3" width="18.5" height="18.1" rx="2.6" fill="#dbeaf7" stroke="#7eabd4" stroke-width="1"/>
<g transform="translate(321.1,40.9)" stroke="#0f2034" stroke-width="0.9" stroke-linejoin="round"><polygon points="-5.2,-2.8 0.7,-6.2 5.3,-1.9 -0.4,0.7" fill="#1f3a5a"/><polygon points="-5.2,-2.8 -0.4,0.7 -0.2,6.4 -4.5,2.6" fill="#13273f"/><polygon points="-0.4,0.7 5.3,-1.9 4.9,1.8 -0.2,6.4" fill="#1a3150"/><path d="M-4.6,-0.4 L-0.4,2.6 L5,0 M-4.5,1.4 L-0.3,4.4" fill="none" stroke="#9cc4e2" stroke-width="1"/></g>
<g transform="translate(340.5,41.1)" stroke="#1c5a8c" stroke-width="0.8" stroke-linejoin="round"><polygon points="-5.2,-2.8 0.7,-6.2 5.3,-1.9 -0.4,0.7" fill="#2a9ad2"/><polygon points="-5.2,-2.8 -0.4,0.7 -0.2,6.4 -4.5,2.6" fill="#2a74b4"/><polygon points="-0.4,0.7 5.3,-1.9 4.9,1.8 -0.2,6.4" fill="#1d5a70"/><polygon points="-2.6,-2.4 1.2,-3.4 2.2,-1 -0.4,0.2" fill="#e8e4d0" stroke="none"/><polygon points="0.4,2.6 4.6,0 4.6,1.6 0.2,5" fill="#3f9a6a" stroke="none"/></g>
<g transform="translate(359.2,41.1)" stroke="#23272a" stroke-width="0.8" stroke-linejoin="round"><polygon points="-5.2,-2.8 0.7,-6.2 5.3,-1.9 -0.4,0.7" fill="#4a5054"/><polygon points="-5.2,-2.8 -0.4,0.7 -0.2,6.4 -4.5,2.6" fill="#2b2f33"/><polygon points="-0.4,0.7 5.3,-1.9 4.9,1.8 -0.2,6.4" fill="#3b4044"/><polygon points="1,2.4 4.2,0.8 4,2.4 0.8,4.4" fill="#787e84" stroke="none"/></g>
<g fill="#fbfcff" stroke="#1d3552" stroke-width="1.3" stroke-linejoin="round"><path d="M382.4,36.6 L384.6,35.2 L387.6,38.8 L391,35.2 L393.2,39.3 L392.8,44.5 L387.6,48 L382.4,43.9 Z"/><path d="M382.6,37 L387.6,42 L393,39.4 M387.6,42 V48" fill="none" stroke-width="0.7"/></g>
<g fill="#fbfcff" stroke="#1d3552" stroke-width="1.3" stroke-linejoin="round"><rect x="401.2" y="35.9" width="11.2" height="11.2"/><path d="M406.8,35.9 V47.1 M410.2,38.2 H412.4 M410.2,38.2 V40.6 H412.4" fill="none" stroke-width="0.9"/></g>
<g fill="#fbfcff" stroke="#1d3552" stroke-width="1.3" stroke-linejoin="round"><path d="M420.3,47.3 V42 L425.4,37 L428.6,39.6 V35.3 H431.6 V47.3 Z"/><rect x="424.2" y="42.4" width="2.9" height="4.9" fill="#1d3552" stroke="none"/></g>
<g fill="#fbfcff" stroke="#1d3552" stroke-width="1.3" stroke-linejoin="round"><path d="M439.5,47.3 V37.6 L443.6,35.4 H447 L450.2,37.6 V47.3 Z"/><path d="M444,35.4 V47.3 M447.4,35.6 V47.3 M439.5,40.4 H447.4" fill="none" stroke-width="0.8"/></g>
<g fill="#fbfcff" stroke="#1d3552" stroke-width="1.3" stroke-linejoin="round"><path d="M458.6,47.3 V38.4 Q458.6,37.2 460.6,37 V35.4 H464.6 V37 H468 Q469.8,37.2 469.8,38.4 V47.3 Z"/><path d="M458.6,40 H469.8" fill="none" stroke-width="0.8"/><rect x="461.8" y="42" width="2.6" height="2.6" fill="none" stroke-width="0.6"/></g>
<g fill="#fbfcff" stroke="#1d3552" stroke-width="1.3" stroke-linejoin="round"><path d="M477.8,47.3 V35.4 H480.6 V38.8 L483.4,36.4 L488.8,41 V47.3 Z"/></g>
<g fill="#fbfcff" stroke="#1d3552" stroke-width="1.3" stroke-linejoin="round"><path d="M499.4,36.6 H508.1 V45.6 Q508,47.3 506,47.3 H498.2 V41.4 Q499.4,39.8 499.4,36.6 Z"/></g>
<g stroke="#1a7a9c" stroke-width="1" stroke-linejoin="round"><polygon points="522.4,38.7 528.8,34 538,43.4 525.9,48.6" fill="#3fb0d4"/><path d="M525,41.6 Q527.6,36 530.4,38.4 Q532.4,41 528,43.6 Q525.6,45.8 528.4,46.6 M531.4,45.6 Q535.2,43.6 533.6,40.4" fill="none" stroke="#f0fafd" stroke-width="1.1"/></g>
<g stroke="#1a7a9c" stroke-width="0.9"><polygon points="542.7,37.5 552.6,35.2 557.2,42.8 545,47.4" fill="#8fd2ee"/><path d="M546,36.8 L549,46 M549.4,36 L553.2,44.4 M543.6,40.8 L554.2,38 M544.4,44.2 L555.8,40.6" fill="none" stroke="#f0fafd" stroke-width="0.8"/></g><circle cx="552.8" cy="35.2" r="1.95" fill="#dc1424"/><circle cx="542.7" cy="37.5" r="1.45" fill="#14243c"/><circle cx="545" cy="47.5" r="1.45" fill="#14243c"/><path d="M542.7,37.5 L545,47.5" stroke="#14243c" stroke-width="0.8"/>
<g><polygon points="564.2,43.4 571.7,38.7 579.3,42.2 571.7,48" fill="#3aa8d8" stroke="#1a7a9c" stroke-width="1"/><path d="M571.7,35 V44.6" stroke="#dc1424" stroke-width="1.7"/><path d="M569.6,36.6 L571.7,33.2 L573.8,36.6 Z M569.6,43.2 L571.7,46.4 L573.8,43.2 Z" fill="#dc1424" stroke="#dc1424" stroke-width="0.6" stroke-linejoin="round"/></g>
<g stroke="#182c44" stroke-width="1" stroke-linejoin="round"><polygon points="582.9,39.3 589.9,34.1 598.6,42.8 585.8,48.6" fill="#4ab0d8"/><polygon points="585.6,40.6 589.6,37 594.6,42 589,45.4" fill="#bfe2f2" stroke="none"/><path d="M588.2,38.6 L588.8,42.6 L592.6,41 L591.6,37.6" fill="#fbfdff" stroke-width="0.9"/></g>
<g stroke="#182c44" stroke-width="1" stroke-linejoin="round"><polygon points="602.6,38.7 611.4,34.6 617.7,42.8 605.6,48" fill="#d4eaf5"/><ellipse cx="610.6" cy="42.2" rx="2.6" ry="3.1" fill="#8fd0ea" stroke="#1a7a9c" stroke-width="0.8"/><ellipse cx="610.4" cy="35.2" rx="3.1" ry="1.5" fill="#fbfdff" stroke-width="0.8"/></g>
<g stroke="#182c44" stroke-width="1" stroke-linejoin="round"><polygon points="622.4,38.1 629.4,34.6 637.5,42.2 625.3,47.4" fill="#45aedc"/><path d="M624.6,41.4 L629.6,37 L634.4,42 L627.6,45.6 Z M627,39.2 L631,43.8 M626,43.6 L632,39.6" fill="none" stroke="#e8f6fc" stroke-width="0.8"/></g>
<g stroke="#182c44" stroke-width="1" stroke-linejoin="round"><polygon points="641.6,43.9 647.4,34.1 656.7,35.2 654.3,48" fill="#45aedc"/><polygon points="647.4,34.1 656.7,35.2 654.3,48" fill="#aab6e0"/><polygon points="647.4,34.1 656.7,35.2 649,41" fill="#cfe6f4" stroke="none"/><path d="M641.6,43.9 L656.7,35.2 M647.4,34.1 L654.3,48" fill="none" stroke-width="0.9"/></g>
<g><path d="M672.2,35.6 H678.4 L681,38.4 V46.8 H672.2 Z" fill="#fdfdff" stroke="#8e949c" stroke-width="1" stroke-linejoin="round"/><path d="M678.4,35.6 V38.4 H681" fill="none" stroke="#8e949c" stroke-width="0.8"/></g>
<!-- overlay text, highlights -->
<polygon points="48,2.5 76,3 102.6,4.8 102.8,15.4 76,14 48,12.7" fill="#f8f520"/>
<rect x="97.4" y="443.3" width="38" height="12.6" rx="2.5" fill="#f4f233"/>
<rect x="216.3" y="441.9" width="51.2" height="14" rx="2.5" fill="#f4f233"/>
<polygon points="7.6,3.2 11.2,5 11.8,9 8.6,11.8 4.6,11.2 3.2,7.4 4.6,4.2" fill="#2581ac" stroke="#2581ac" stroke-width="1.2" stroke-linejoin="round"/>
<path d="M5,6 Q7.6,3.8 10,6.2 M5.2,8.8 Q6.4,6.2 8.6,7.2 Q10.4,8.4 8.8,10.4 M6.6,10.8 V8.6" fill="none" stroke="#c4e4f2" stroke-width="0.75" stroke-linecap="round"/>
<text x="16" y="10.6" font-family="Liberation Sans, sans-serif" font-size="7.1" fill="#8a8a8a" textLength="32" lengthAdjust="spacingAndGlyphs" >Untitled* -</text>
<text x="50.8" y="10.6" font-family="Liberation Sans, sans-serif" font-size="7.1" fill="#86864a" textLength="45.9" lengthAdjust="spacingAndGlyphs" >SketchUp 2025</text>
<text x="4.5" y="26.2" font-family="Liberation Sans, sans-serif" font-size="7.1" fill="#262626" textLength="10.2" lengthAdjust="spacingAndGlyphs" >File</text>
<text x="24.7" y="26.2" font-family="Liberation Sans, sans-serif" font-size="7.1" fill="#262626" textLength="11.6" lengthAdjust="spacingAndGlyphs" >Edit</text>
<text x="45" y="26.2" font-family="Liberation Sans, sans-serif" font-size="7.1" fill="#262626" textLength="15.3" lengthAdjust="spacingAndGlyphs" >View</text>
<text x="69.2" y="26.2" font-family="Liberation Sans, sans-serif" font-size="7.1" fill="#262626" textLength="26.3" lengthAdjust="spacingAndGlyphs" >Camera</text>
<text x="104.9" y="26.2" font-family="Liberation Sans, sans-serif" font-size="7.1" fill="#262626" textLength="17.7" lengthAdjust="spacingAndGlyphs" >Draw</text>
<text x="131.5" y="26.2" font-family="Liberation Sans, sans-serif" font-size="7.1" fill="#262626" textLength="17.3" lengthAdjust="spacingAndGlyphs" >Tools</text>
<text x="157.2" y="26.2" font-family="Liberation Sans, sans-serif" font-size="7.1" fill="#262626" textLength="26.6" lengthAdjust="spacingAndGlyphs" >Window</text>
<text x="192.5" y="26.2" font-family="Liberation Sans, sans-serif" font-size="7.1" fill="#262626" textLength="35.2" lengthAdjust="spacingAndGlyphs" >Extensions</text>
<text x="236.9" y="26.2" font-family="Liberation Sans, sans-serif" font-size="7.1" fill="#262626" textLength="14.8" lengthAdjust="spacingAndGlyphs" >Help</text>
<g transform="translate(3,54.1) rotate(90)"><text x="0" y="0" font-family="Liberation Sans, sans-serif" font-size="7.3" fill="#262626" textLength="42.1" lengthAdjust="spacingAndGlyphs" >Default Tray</text></g>
<text x="40.9" y="454.7" font-family="Liberation Sans, sans-serif" font-size="7.5" fill="#4a4a4a" textLength="52.5" lengthAdjust="spacingAndGlyphs" >Enter = Accept;</text>
<text x="100.6" y="454.7" font-family="Liberation Sans, sans-serif" font-size="7.5" fill="#44441c" textLength="33.9" lengthAdjust="spacingAndGlyphs" >UP Arrow</text>
<text x="134.5" y="454.7" font-family="Liberation Sans, sans-serif" font-size="7.5" fill="#4a4a4a" textLength="78.1" lengthAdjust="spacingAndGlyphs" >/Home = Toggle Curve;</text>
<text x="219" y="454.7" font-family="Liberation Sans, sans-serif" font-size="7.5" fill="#44441c" textLength="48.4" lengthAdjust="spacingAndGlyphs" >DOWN Arrow</text>
<text x="267.4" y="454.7" font-family="Liberation Sans, sans-serif" font-size="7.5" fill="#4a4a4a" textLength="64.9" lengthAdjust="spacingAndGlyphs" >/End = Toggle Line;</text>
<circle cx="7.8" cy="451" r="3.4" fill="none" stroke="#a8a8ae" stroke-width="0.8"/>
<text x="6.3" y="453" font-family="Liberation Sans, sans-serif" font-size="5.5" fill="#9a9aa0">?</text>
<circle cx="24.3" cy="451" r="3.6" fill="#fff" stroke="#222" stroke-width="1.1"/>
<circle cx="24.3" cy="449.4" r="0.9" fill="#222"/><path d="M24.3,450.4 V453.3" stroke="#222" stroke-width="1.4"/>
<line x1="36.5" y1="444" x2="36.5" y2="459" stroke="#dcdce4" stroke-width="1"/>
<rect x="635.9" y="231.5" width="21.2" height="35.4" fill="#f3f3f9"/>
<rect x="636.6" y="232.3" width="19.4" height="11.8" fill="#9db6d9"/>
<path d="M648.6,235.2 L652.8,239.6 M652.8,235.2 L648.6,239.6" stroke="#3a5f9a" stroke-width="0.8"/>
<path d="M639.6,241.2 h1 m0.9,0 h1 m0.9,0 h1" stroke="#3a5f9a" stroke-width="0.9"/>
<path d="M639.8,254.6 Q645.2,247.6 650.6,253.6" fill="none" stroke="#2c2c2c" stroke-width="1.9"/>
<path d="M648.6,254.4 L652,255.6 L651.6,251.6 Z" fill="#2c2c2c"/>
<path d="M640,258.8 H651 L652.4,259.8 L651,260.8 H640 Z" fill="#666"/>
<!-- annotations -->
<g fill="none" stroke="#e2141e" stroke-width="1.5" stroke-linecap="round" stroke-linejoin="round">
<path d="M106.3,11.1 C107.2,12.4 110.0,16.3 111.9,19.2 C113.9,22.1 115.8,25.5 118.0,28.7 C120.2,31.9 122.5,35.2 125.0,38.3 C127.5,41.4 130.7,44.8 132.8,47.4 C134.9,50.0 136.2,51.5 137.6,54.0 C139.0,56.5 140.0,59.3 141.0,62.5 C142.0,65.7 143.3,71.2 143.8,73.0"/>
<path d="M106.3,11.1 C107.2,11.1 110.3,10.8 112.0,10.9 C113.7,11.1 114.9,11.2 116.5,12.0 C118.1,12.8 120.7,15.1 121.5,15.7"/>
<path d="M109.3,13.0 C110.2,13.1 113.0,13.2 115.0,13.6 C117.0,14.0 120.4,15.3 121.5,15.7" stroke-width="1.2"/>
<path d="M106.3,11.1 C106.7,12.4 107.6,16.0 108.5,19.0 C109.4,22.0 111.0,27.5 111.5,29.2"/>
<path d="M348.5,388.4 C347.8,389.2 345.9,391.6 344.5,393.0 C343.1,394.4 341.7,395.1 340.0,396.7 C338.3,398.3 336.2,400.5 334.5,402.5 C332.8,404.5 331.2,406.6 329.5,408.8 C327.8,411.1 326.0,413.7 324.5,416.0 C323.0,418.3 322.1,420.2 320.4,422.5 C318.6,424.8 316.4,427.4 314.0,429.5 C311.6,431.6 307.3,434.4 306.0,435.4"/>
<path d="M306.0,435.4 C306.5,433.8 307.9,428.9 309.0,426.0 C310.1,423.1 312.2,419.3 312.8,418.0"/>
<path d="M307.2,432.0 C307.8,430.8 309.6,426.7 310.6,424.5 C311.6,422.3 312.9,419.6 313.4,418.6" stroke-width="1.1"/>
<path d="M306.0,435.4 C308.7,434.8 316.6,433.2 322.0,431.5 C327.4,429.8 335.8,426.2 338.6,425.2"/>
</g>
</svg>
</body></html>
